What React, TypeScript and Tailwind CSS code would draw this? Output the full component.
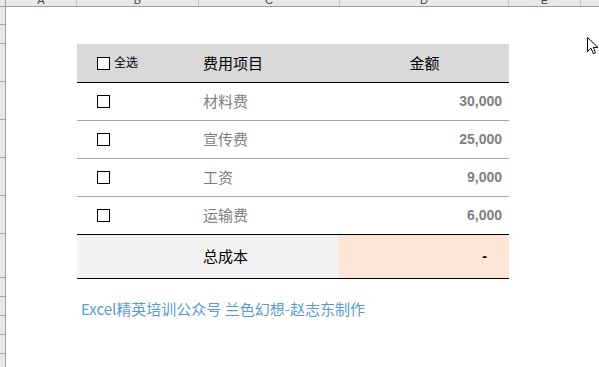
import React from "react";

const cjk = { fontFamily: '"Noto Sans CJK SC", "Noto Sans", sans-serif' };
const num = { fontFamily: '"Liberation Sans", Arial, sans-serif' };

// Column letters of the sheet header strip with their widths (px)
const columns: { label: string; width: number }[] = [
  { label: "A", width: 71 },
  { label: "B", width: 122 },
  { label: "C", width: 141 },
  { label: "D", width: 169 },
  { label: "E", width: 72 },
  { label: "", width: 30 },
];

// Row header heights, each including its 1px bottom separator
const rowHeights = [18, 19, 38, 38, 38, 38, 38, 44, 19, 19, 19, 19, 19];

const items = [
  { name: "材料费", amount: "30,000" },
  { name: "宣传费", amount: "25,000" },
  { name: "工资", amount: "9,000" },
  { name: "运输费", amount: "6,000" },
];

function Box() {
  return <span className="block w-[13px] h-[13px] border border-black bg-white shrink-0" />;
}

function Cursor() {
  return (
    <svg
      className="absolute left-[587px] top-[37px]"
      width="13"
      height="18"
      viewBox="0 0 13 18"
    >
      <path
        d="M0.5 0.5 L0.5 14.5 L4 11.2 L6.4 16.8 L8.6 15.8 L6.3 10.4 L11 10.4 Z"
        fill="#fff"
        stroke="#000"
        strokeWidth="1"
        strokeLinejoin="miter"
      />
    </svg>
  );
}

export default function App() {
  return (
    <div className="relative w-[599px] h-[367px] overflow-hidden bg-white flex flex-col">
      {/* column header strip */}
      <div className="flex h-[7px] shrink-0 border-b border-[#a0a0a0] bg-[#e8e8e8] overflow-hidden">
        <div className="w-[6px] shrink-0 border-r border-[#a0a0a0]" />
        {columns.map((c, i) => (
          <div
            key={i}
            style={{ width: c.width }}
            className="shrink-0 h-[6px] flex items-end justify-center border-r border-[#c6c6c6] overflow-hidden"
          >
            <span
              className="text-[11px] leading-[11px] text-[#444]"
              style={num}
            >
              {c.label}
            </span>
          </div>
        ))}
      </div>

      <div className="flex flex-1">
        {/* row header strip */}
        <div className="w-[6px] shrink-0 bg-[#e8e8e8] border-r border-[#a0a0a0] flex flex-col">
          {rowHeights.map((h, i) => (
            <div
              key={i}
              style={{ height: h }}
              className="shrink-0 border-b border-[#a8a8a8]"
            />
          ))}
        </div>

        <div className="flex-1 flex flex-col">
          <div className="ml-[71px] mt-[37px] w-[432px]" style={cjk}>
            {/* header row */}
            <div className="grid grid-cols-[122px_141px_169px] h-[39px] bg-[#d9d9d9] border-b border-black">
              <div className="flex items-start pl-[20px] pt-[13px]">
                <Box />
                <span className="ml-[4px] -mt-[4px] text-[12px] leading-[17px] text-black">全选</span>
              </div>
              <div className="flex items-center pl-[4px] text-[15px] text-black">费用项目</div>
              <div className="flex items-center justify-center text-[15px] text-black">金额</div>
            </div>

            {/* expense rows */}
            {items.map((it, i) => (
              <div
                key={it.name}
                className={`grid grid-cols-[122px_141px_169px] h-[38px] border-b ${
                  i === items.length - 1 ? "border-black" : "border-[#a6a6a6]"
                }`}
              >
                <div className="flex items-center pl-[20px]">
                  <Box />
                </div>
                <div className="flex items-center pl-[4px] text-[15px] text-[#7f7f7f]">
                  {it.name}
                </div>
                <div
                  className="flex items-center justify-end pr-[7px] text-[14px] font-bold text-[#7f7f7f]"
                  style={num}
                >
                  {it.amount}
                </div>
              </div>
            ))}

            {/* total row */}
            <div className="grid grid-cols-[122px_140px_170px] h-[44px] border-b border-black">
              <div className="bg-[#f2f2f2]" />
              <div className="bg-[#f2f2f2] flex items-center pl-[4px] text-[15px] text-black">
                总成本
              </div>
              <div
                className="bg-[#fce4d6] flex items-center justify-end pr-[22px] text-[14px] font-bold text-black"
                style={num}
              >
                -
              </div>
            </div>
          </div>

          <div
            className="ml-[75px] mt-[20px] text-[15px] leading-[20px] text-[#5b9bd5]"
            style={cjk}
          >
            Excel精英培训公众号 兰色幻想-赵志东制作
          </div>
        </div>
      </div>

      <Cursor />
    </div>
  );
}
